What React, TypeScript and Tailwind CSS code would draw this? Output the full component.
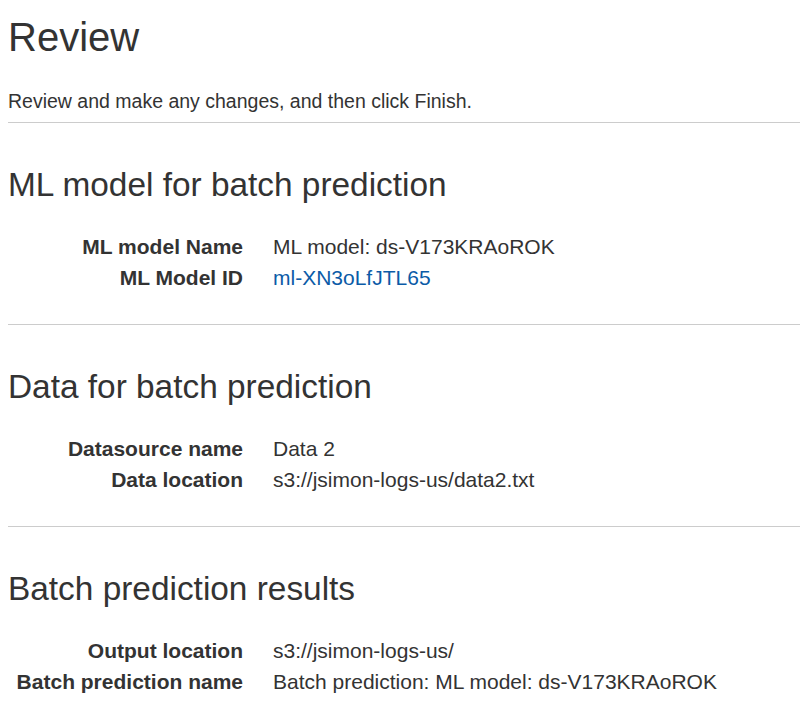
const sections = [
  {
    title: "ML model for batch prediction",
    rows: [
      { label: "ML model Name", value: "ML model: ds-V173KRAoROK" },
      { label: "ML Model ID", value: "ml-XN3oLfJTL65", link: true },
    ],
  },
  {
    title: "Data for batch prediction",
    rows: [
      { label: "Datasource name", value: "Data 2" },
      { label: "Data location", value: "s3://jsimon-logs-us/data2.txt" },
    ],
  },
  {
    title: "Batch prediction results",
    rows: [
      { label: "Output location", value: "s3://jsimon-logs-us/" },
      { label: "Batch prediction name", value: "Batch prediction: ML model: ds-V173KRAoROK" },
    ],
  },
];

export default function App() {
  return (
    <div className="min-h-[720px] bg-white pl-2 text-[#333] font-['Liberation_Sans',Arial,sans-serif]">
      <h1 className="pt-[13px] text-[40px] leading-[48px]">Review</h1>
      <p className="mt-[29px] mb-[10px] text-[19.5px] leading-[22px]">
        Review and make any changes, and then click Finish.
      </p>

      {sections.map((s) => (
        <section key={s.title} className="border-t border-[#ccc] pb-[31px]">
          <h2 className="pt-[43px] text-[33.4px] leading-[38px]">{s.title}</h2>
          <dl className="mt-[27px] grid grid-cols-[235px_1fr] gap-x-[30px] text-[21px] leading-[31px]">
            {s.rows.map((r) => (
              <div key={r.label} className="contents">
                <dt className="text-right font-bold">{r.label}</dt>
                <dd className={r.link ? "text-[#0b5ba7]" : ""}>{r.value}</dd>
              </div>
            ))}
          </dl>
        </section>
      ))}
    </div>
  );
}
